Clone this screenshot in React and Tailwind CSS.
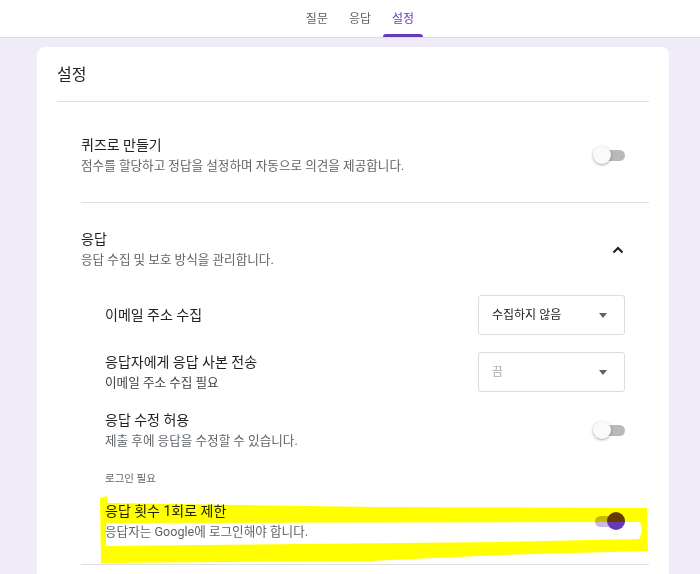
import React from "react";

function Toggle({ on }) {
  return (
    <div className="relative w-[32px] h-[18px] shrink-0">
      <div className={`absolute left-[2px] right-0 top-[4px] h-[11px] rounded-full ${on ? "bg-[#c9b8e8]" : "bg-[#b9b9b9]"}`} />
      <div
        className={`absolute top-0 w-[18px] h-[18px] rounded-full ${on ? "right-0 bg-[#673ab7]" : "left-0 bg-[#fafafa] shadow-[0_1px_3px_rgba(0,0,0,0.35)]"}`}
      />
    </div>
  );
}

function Select({ value, muted }) {
  return (
    <div className="w-[147px] h-[40px] border border-[#dadce0] rounded-[3px] flex items-center justify-between pl-[13px] pr-[17px] shrink-0">
      <span className={`text-[12px] ${muted ? "text-[#aaaaaa]" : "text-[#202124]"}`}>{value}</span>
      <svg width="8" height="5" viewBox="0 0 8 5">
        <path d="M0 0 L8 0 L4 5 Z" fill="#5f6368" />
      </svg>
    </div>
  );
}

function Labels({ title, desc, descDark }) {
  return (
    <div className="flex flex-col">
      <div className="text-[14px] leading-[20px] text-[#202124]">{title}</div>
      {desc && (
        <div className={`mt-[2px] text-[12.6px] leading-[18px] ${descDark ? "text-[#3c4043]" : "text-[#5f6368]"}`}>{desc}</div>
      )}
    </div>
  );
}

export default function App() {
  return (
    <div className="relative w-[700px] h-[574px] overflow-hidden bg-[#f0ebf8] font-['Roboto','Noto_Sans_CJK_KR',sans-serif]">
      {/* tabs */}
      <div className="h-[38px] bg-white border-b border-[#dadce0] flex justify-center pl-[20px]">
        <div className="flex gap-[21px] items-stretch">
          <div className="flex items-center text-[12px] text-[#5f6368]">질문</div>
          <div className="flex items-center text-[12px] text-[#5f6368]">응답</div>
          <div className="relative flex items-center text-[12px] text-[#673ab7] px-[9px] -mx-[9px]">
            설정
            <div className="absolute left-0 right-0 bottom-0 h-[3px] rounded-t-[3px] bg-[#673ab7]" />
          </div>
        </div>
      </div>

      {/* card */}
      <div className="ml-[37px] mt-[9px] w-[632px] bg-white rounded-[8px] px-[20px] pb-[40px]">
        <div className="pt-[18px] pb-[16px] border-b border-[#e0e0e0] text-[16px] leading-[20px] text-[#202124]">설정</div>

        <div className="ml-[24px] border-b border-[#e0e0e0] pt-[33px] pb-[27px] pr-[24px] flex items-center justify-between">
          <Labels title="퀴즈로 만들기" desc="점수를 할당하고 정답을 설정하며 자동으로 의견을 제공합니다." />
          <Toggle />
        </div>

        <div className="ml-[24px] border-b border-[#e0e0e0] pt-[26px] pb-[23px] pr-[24px]">
          <div className="flex items-center justify-between">
            <Labels title="응답" desc="응답 수집 및 보호 방식을 관리합니다." />
            <svg width="12" height="8" viewBox="0 0 12 8" className="mr-[1px] mt-[2px]">
              <path d="M1.5 6.5 L6 2 L10.5 6.5" fill="none" stroke="#202124" strokeWidth="2.2" />
            </svg>
          </div>

          <div className="pl-[24px] mt-[26px] flex flex-col">
            <div className="flex items-center justify-between">
              <div className="text-[14px] leading-[20px] text-[#202124]">이메일 주소 수집</div>
              <Select value="수집하지 않음" />
            </div>
            <div className="flex items-center justify-between mt-[17px]">
              <Labels title="응답자에게 응답 사본 전송" desc="이메일 주소 수집 필요" descDark />
              <Select value="끔" muted />
            </div>
            <div className="flex items-center justify-between mt-[18px]">
              <Labels title="응답 수정 허용" desc="제출 후에 응답을 수정할 수 있습니다." />
              <Toggle />
            </div>
            <div className="mt-[21px] text-[10.5px] leading-[16px] text-[#5f6368]">로그인 필요</div>
            <div className="flex items-center justify-between mt-[14px]">
              <Labels title="응답 횟수 1회로 제한" desc="응답자는 Google에 로그인해야 합니다." />
              <Toggle on />
            </div>
          </div>
        </div>
      </div>

      {/* highlighter marks over the page */}
      <svg
        className="absolute inset-0 pointer-events-none mix-blend-multiply"
        width="700"
        height="574"
        viewBox="0 0 700 574"
      >
        <path
          fillRule="evenodd"
          fill="#ffff00"
          d="M100 498 L107 496 L108 503 L380 507 L647 508 L648 551 L500 555 L370 561 L101 563 Z M106 523 L640 522 Q644 531 639 539 L500 542 L106 546 Z"
        />
      </svg>
    </div>
  );
}
